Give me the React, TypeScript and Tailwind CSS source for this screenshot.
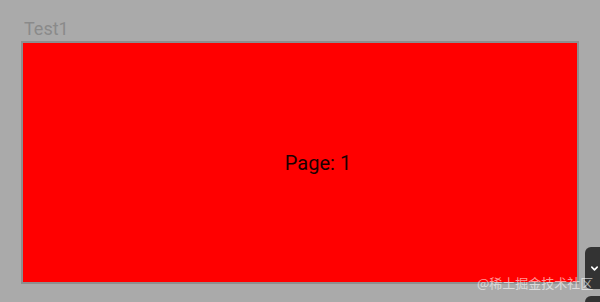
import React from "react";

export default function App() {
  return (
    <div
      className="relative w-[600px] h-[302px] overflow-hidden bg-[#aaaaaa] px-[21px]"
      style={{ fontFamily: "Roboto, 'Noto Sans CJK SC', sans-serif" }}
    >
      <div className="pt-[18px] pl-[3px] text-[18px] leading-[21px] text-[#8a8a8a]">Test1</div>
      <div className="mt-[2px] w-[558px] h-[243px] border-2 border-[#8e8e8e] bg-[#ff0000] flex items-center justify-center pl-[36px]">
        <span className="text-[20px] leading-[24px] text-[#1a0000]">Page: 1</span>
      </div>
      <div className="absolute left-[585px] top-[247px] w-[24px] h-[42px] rounded-l-[6px] bg-[#333333] flex items-center pl-[5px]">
        <svg width="9" height="9" viewBox="0 0 10 10" fill="none">
          <path d="M2 3.5 L5 6.5 L8 3.5" stroke="#ffffff" strokeWidth="1.8" strokeLinecap="round" strokeLinejoin="round" />
        </svg>
      </div>
      <div className="absolute left-[585px] top-[296px] w-[24px] h-[20px] rounded-l-[6px] bg-[#333333]" />
      <div
        className="absolute left-[477px] top-[275px] text-[13px] leading-[16px] text-white/60 whitespace-nowrap"
        style={{ fontFamily: "'Noto Sans CJK SC', sans-serif" }}
      >
        @稀土掘金技术社区
      </div>
    </div>
  );
}
